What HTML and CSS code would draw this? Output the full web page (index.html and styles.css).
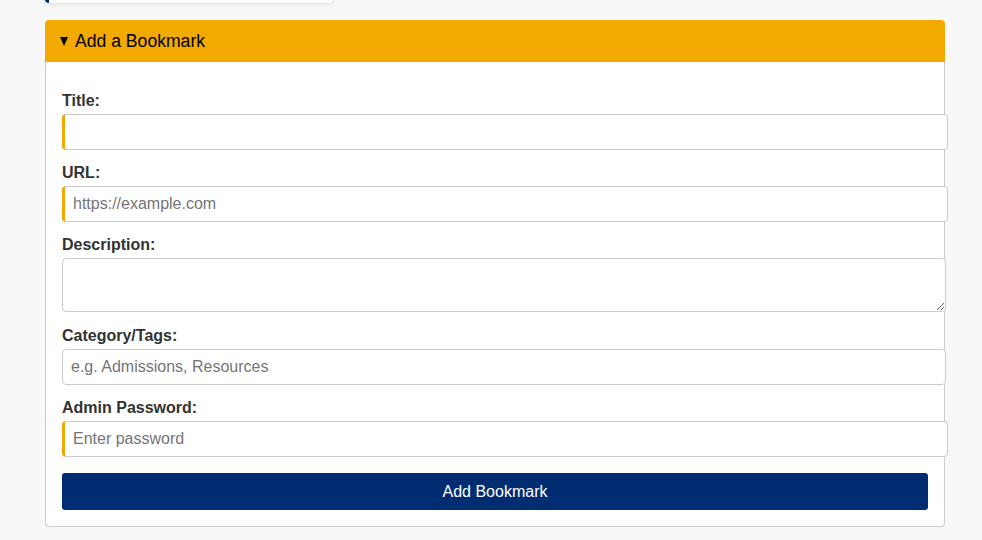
FILE: index.html
```html
<!DOCTYPE html>
<html lang="en">
<head>
  <meta charset="UTF-8">
  <meta name="viewport" content="width=device-width, initial-scale=1">
  <title>Bookmarks</title>
  <link rel="stylesheet" href="styles.css">
</head>
<body>

  <div class="container">
    <div class="bookmark-card"></div>

    <details class="add-panel" open>
      <summary>Add a Bookmark</summary>
      <form class="panel-body" onsubmit="return false">
        <label for="title">Title:</label>
        <input type="text" id="title" class="required">

        <label for="url">URL:</label>
        <input type="url" id="url" class="required" placeholder="https://example.com">

        <label for="description">Description:</label>
        <textarea id="description" rows="2"></textarea>

        <label for="tags">Category/Tags:</label>
        <input type="text" id="tags" placeholder="e.g. Admissions, Resources">

        <label for="password">Admin Password:</label>
        <input type="password" id="password" class="required" placeholder="Enter password">

        <button type="submit">Add Bookmark</button>
      </form>
    </details>
  </div>

</body>
</html>
```

FILE: styles.css
```css
body {
  margin: 0;
  background-color: #f8f8f8;
  font-family: "Liberation Sans", Arial, sans-serif;
  color: #333;
}

.container {
  width: 900px;
  margin-left: 45px;
}

.bookmark-card {
  width: 284px;
  height: 40px;
  margin-top: -37px;
  margin-bottom: 17px;
  background-color: #fff;
  border-left: 4px solid #002d72;
  border-radius: 4px;
  box-shadow: 0 1px 4px rgba(0, 0, 0, 0.12);
}

.add-panel summary {
  display: flex;
  align-items: center;
  list-style: none;
  background-color: #f2a900;
  color: #000;
  font-size: 1.1em;
  padding: 10px 14px;
  line-height: 22px;
  border-radius: 4px 4px 0 0;
  cursor: pointer;
}

.add-panel summary::-webkit-details-marker {
  display: none;
}

/* little disclosure triangle */
.add-panel summary::before {
  content: "";
  width: 0;
  height: 0;
  margin: 1px 7px 0 1px;
  border-left: 4.5px solid transparent;
  border-right: 4.5px solid transparent;
  border-top: 9px solid #000;
}

.panel-body {
  background-color: #fff;
  border: 1px solid #ccc;
  border-top: none;
  border-radius: 0 0 4px 4px;
  padding: 16px;
}

label {
  display: block;
  font-weight: bold;
  font-size: 16px;
  margin: 14px 0 4px;
}

input,
textarea {
  display: block;
  width: 100%;
  padding: 8px;
  font-family: "Liberation Sans", Arial, sans-serif;
  font-size: 16px;
  line-height: 18px;
  color: #333;
  border: 1px solid #ccc;
  border-radius: 4px;
  margin: 0;
}

textarea {
  height: 54px;
  box-sizing: border-box;
  width: calc(100% + 18px);
}

textarea + label {
  margin-top: 15px;
}

input.required {
  border-left: 3px solid #f2a900;
}

button {
  display: block;
  width: 100%;
  margin-top: 16px;
  padding: 10px;
  border: none;
  border-radius: 3px;
  background-color: #002d72;
  color: white;
  font-family: "Liberation Sans", Arial, sans-serif;
  font-size: 16px;
  line-height: 17px;
  cursor: pointer;
}

button:hover {
  background-color: #003b94;
}
```
